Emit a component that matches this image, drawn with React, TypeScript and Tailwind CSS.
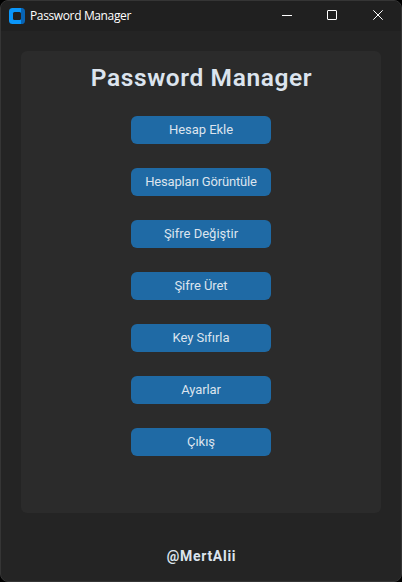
const actions = [
  { label: 'Hesap Ekle', tracking: 'tracking-[-0.05px]' },
  { label: 'Hesapları Görüntüle', tracking: 'tracking-[-0.17px]' },
  { label: 'Şifre Değiştir', tracking: 'tracking-normal' },
  { label: 'Şifre Üret', tracking: 'tracking-[-0.05px]' },
  { label: 'Key Sıfırla', tracking: 'tracking-[-0.05px]' },
  { label: 'Ayarlar', tracking: 'tracking-[-0.1px]' },
  { label: 'Çıkış', tracking: 'tracking-[-0.05px]' },
];

function AppIcon() {
  return (
    <svg width="16" height="16" viewBox="0 0 16 16" className="shrink-0">
      <rect width="15" height="16" rx="3.5" fill="#0a96fa" />
      <path d="M12 0h.5A3.5 3.5 0 0 1 16 3.5v9a3.5 3.5 0 0 1-3.5 3.5H12Z" fill="#0864b4" />
      <rect x="4" y="4" width="8" height="8" rx="1.5" fill="#212121" />
    </svg>
  );
}

function TitleBar() {
  return (
    <header className="flex h-[30px] shrink-0 items-center bg-[#202020] pl-2">
      <AppIcon />
      <span className="ml-[5px] flex-1 whitespace-nowrap font-['Open_Sans','Noto_Sans',sans-serif] text-[12px] leading-4 tracking-[-0.37px] text-white">
        Password Manager
      </span>
      <svg width="135" height="30" viewBox="0 0 135 30" fill="none" stroke="#fff" className="shrink-0">
        <path d="M16 14.5h10" />
        <rect x="61.5" y="9.5" width="9" height="9" rx="0.5" />
        <path d="M107.3 9.3l9.4 9.4M116.7 9.3l-9.4 9.4" />
      </svg>
    </header>
  );
}

export default function App() {
  return (
    <div className="h-[582px] w-[402px] bg-black font-['Roboto','Liberation_Sans',sans-serif]">
      <div className="flex h-full w-full flex-col overflow-hidden rounded-[8px] border border-[#353535] bg-[#242424]">
        <TitleBar />
        <main className="mx-5 mt-5 flex h-[462px] shrink-0 flex-col items-center rounded-[6px] bg-[#2b2b2b] pt-3">
          <h1 className="h-[30px] pl-px text-[24.5px] leading-[30px] font-semibold tracking-[0.6px] whitespace-nowrap text-[#dce4ee]">
            Password Manager
          </h1>
          <div className="mt-[23px] flex flex-col gap-6">
            {actions.map(({ label, tracking }) => (
              <button
                key={label}
                className={`flex h-7 w-[140px] justify-center rounded-[6px] bg-[#1f6aa5] text-[13px] leading-[28px] whitespace-nowrap text-[#dce4ee] ${tracking}`}
              >
                {label}
              </button>
            ))}
          </div>
        </main>
        <footer className="mt-[34px] pl-px text-center text-[14px] leading-[18px] font-bold tracking-[0.7px] text-[#dce4ee]">
          @MertAlii
        </footer>
      </div>
    </div>
  );
}
